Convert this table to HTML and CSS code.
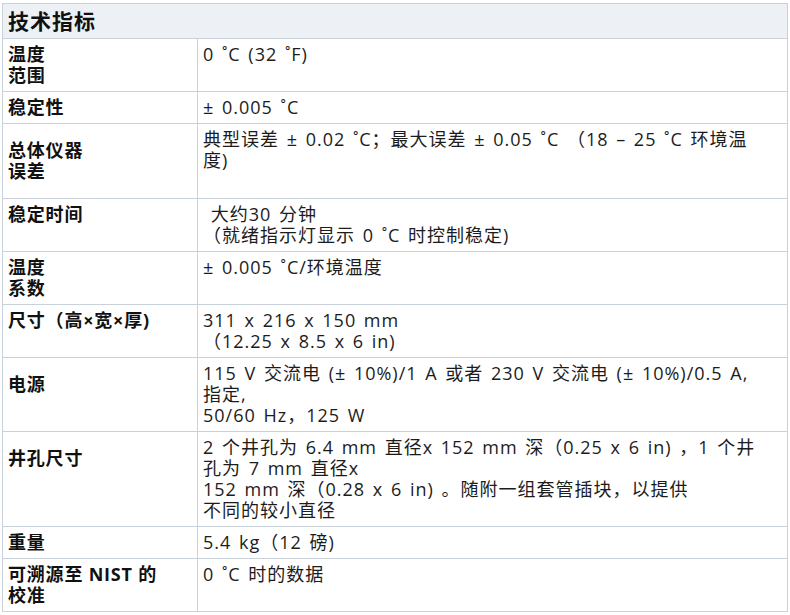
FILE: index.html
```html
<!DOCTYPE html>
<html lang="zh-CN">
<head>
<meta charset="utf-8">
<title>技术指标</title>
<link rel="stylesheet" href="styles.css">
</head>
<body>
<table class="spec">
  <colgroup>
    <col class="col-label">
    <col class="col-value">
  </colgroup>
  <thead>
    <tr><th colspan="2" class="head">技术指标</th></tr>
  </thead>
  <tbody>
    <tr><th>温度<br>范围</th><td>0 ˚C (32 ˚F)</td></tr>
    <tr><th>稳定性</th><td>± 0.005 ˚C</td></tr>
    <tr><th class="pad">总体仪器<br>误差</th><td>典型误差 ± 0.02 ˚C；最大误差 ± 0.05 ˚C （18 – 25 ˚C 环境温<br>度)</td></tr>
    <tr><th>稳定时间</th><td>&nbsp;大约30 分钟<br>（就绪指示灯显示 0 ˚C 时控制稳定)</td></tr>
    <tr><th>温度<br>系数</th><td>± 0.005 ˚C/环境温度</td></tr>
    <tr><th>尺寸（高×宽×厚)</th><td>311 x 216 x 150 mm<br>（12.25 x 8.5 x 6 in)</td></tr>
    <tr><th class="pad">电源</th><td>115 V 交流电 (± 10%)/1 A 或者 230 V 交流电 (± 10%)/0.5 A,<br>指定,<br>50/60 Hz，125 W</td></tr>
    <tr><th class="pad">井孔尺寸</th><td>2 个井孔为 6.4 mm 直径x 152 mm 深（0.25 x 6 in) ，1 个井<br>孔为 7 mm 直径x<br>152 mm 深（0.28 x 6 in) 。随附一组套管插块，以提供<br>不同的较小直径</td></tr>
    <tr><th>重量</th><td>5.4 kg（12 磅)</td></tr>
    <tr><th>可溯源至 NIST 的<br>校准</th><td>0 ˚C 时的数据</td></tr>
  </tbody>
</table>
</body>
</html>
```
FILE: styles.css
```css
html, body {
  margin: 0;
  padding: 0;
  background: #ffffff;
}
body {
  padding: 3px 2px 0 2px;
  font-family: "Open Sans", "Noto Sans CJK SC", sans-serif;
  color: #1c1c1c;
}
.spec {
  width: 786px;
  border-collapse: collapse;
  table-layout: fixed;
  font-size: 18px;
  line-height: 21px;
}
.col-label {
  width: 195px;
}
.spec th,
.spec td {
  border: 1px solid #c9d1da;
  padding: 5px;
  vertical-align: top;
  text-align: left;
  letter-spacing: 1px;
  word-spacing: 2px;
  white-space: nowrap;
}
.spec tbody th {
  font-weight: bold;
  color: #111111;
  letter-spacing: 0.8px;
  word-spacing: 0;
}
.spec th.pad {
  padding-top: 16px;
  padding-bottom: 16px;
}
.spec .head {
  background: #edf1f6;
  font-size: 21px;
  line-height: 24px;
  padding: 5px;
  font-weight: bold;
  letter-spacing: 1px;
  color: #111111;
}
```
